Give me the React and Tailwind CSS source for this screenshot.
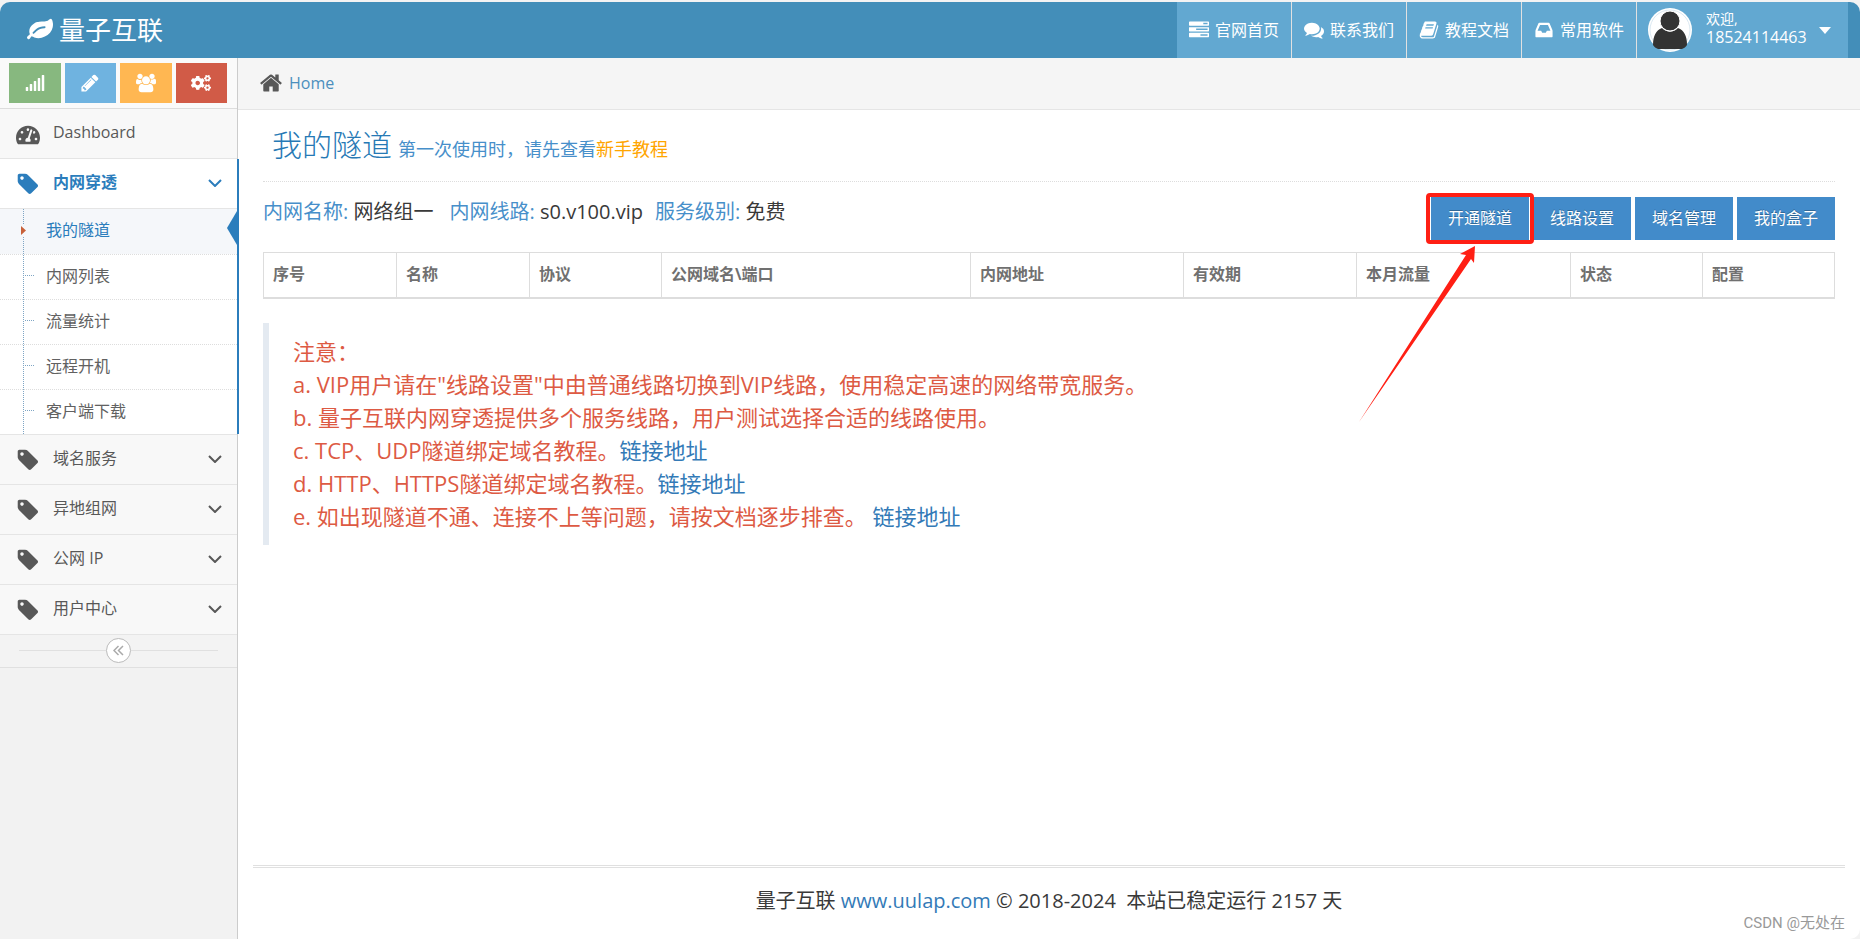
import React, { useState } from "react";
import { FaSignal, FaCogs, FaTachometerAlt } from "react-icons/fa";

const LeafIcon = ({ className }) => (
  <svg viewBox="0 0 1792 1792" fill="currentColor" className={className}>
    <path d="M1280 704q0-26-19-45t-45-19q-172 0-318 49.5t-259.5 134-235.5 219.5q-19 21-19 45 0 26 19 45t45 19q24 0 45-19 27-24 74-71t67-66q137-124 268.5-176t313.5-52q26 0 45-19t19-45zm512-198q0 95-20 193-46 224-184.5 383t-357.5 268q-214 108-438 108-148 0-286-47-15-5-88-42t-96-37q-16 0-39.5 32t-45 70-52.5 70-60 32q-43 0-63.5-17.5t-45.5-59.5q-2-4-6-11t-5.5-10-3-9.5-1.5-13.5q0-35 31-73.5t68-65.5 68-56 31-48q0-4-14-38t-16-44q-9-51-9-104 0-115 43.5-220t119-184.5 170.5-139 204-95.5q55-18 145-25.5t179.5-9 178.5-6 163.5-24 113.5-56.5l29.5-29.5 29.5-28 27-20 36.5-16 43.5-4.5q39 0 70.5 46t47.5 112 24 124 8 96z" />
  </svg>
);

const PencilIcon = ({ className }) => (
  <svg viewBox="0 0 1792 1792" fill="currentColor" className={className}>
    <path d="M491 1536l91-91-235-235-91 91v107h128v128h107zm523-928q0-22-22-22-10 0-17 7l-542 542q-7 7-7 17 0 22 22 22 10 0 17-7l542-542q7-7 7-17zm-54-192l416 416-832 832h-416v-416zm683 96q0 53-37 90l-166 166-416-416 166-165q36-38 90-38 53 0 91 38l235 234q37 39 37 91z" />
  </svg>
);

const GroupIcon = ({ className }) => (
  <svg viewBox="-64 0 1920 1792" fill="currentColor" className={className}>
    <path d="M593 896q-162 5-265 128h-134q-82 0-138-40.5t-56-118.5q0-353 124-353 6 0 43.5 21t97.5 42.5 119 21.5q67 0 133-23-5 37-5 66 0 159 93 290zm1071 637q0 120-73 189.5t-194 69.5h-874q-121 0-194-69.5t-73-189.5q0-53 3.5-103.5t14-109 26.5-108.5 43-97.5 62-81 85.5-53.5 111.5-20q10 0 43 21.5t73 48 107 48 135 21.5 135-21.5 107-48 73-48 43-21.5q61 0 111.5 20t85.5 53.5 62 81 43 97.5 26.5 108.5 14 109 3.5 103.5zm-1024-1277q0 106-75 181t-181 75-181-75-75-181 75-181 181-75 181 75 75 181zm704 384q0 159-112.5 271.5t-271.5 112.5-271.5-112.5-112.5-271.5 112.5-271.5 271.5-112.5 271.5 112.5 112.5 271.5zm576 225q0 78-56 118.5t-138 40.5h-134q-103-123-265-128 93-131 93-290 0-29-5-66 66 23 133 23 59 0 119-21.5t97.5-42.5 43.5-21q124 0 124 353zm-128-609q0 106-75 181t-181 75-181-75-75-181 75-181 181-75 181 75 75 181z" transform="translate(-64 0)" />
  </svg>
);

const TagIcon = ({ className }) => (
  <svg viewBox="0 0 1792 1792" fill="currentColor" className={className}>
    <path d="M576 448q0-53-37.5-90.5t-90.5-37.5-90.5 37.5-37.5 90.5 37.5 90.5 90.5 37.5 90.5-37.5 37.5-90.5zm1067 576q0 53-37 90l-491 492q-39 37-91 37-53 0-90-37l-715-716q-38-37-64.5-101t-26.5-117v-416q0-52 38-90t90-38h416q53 0 117 26.5t102 64.5l715 714q37 39 37 91z" />
  </svg>
);

const HomeIcon = ({ className }) => (
  <svg viewBox="0 0 1792 1792" fill="currentColor" className={className}>
    <path d="M1472 992v480q0 26-19 45t-45 19h-384v-384h-256v384h-384q-26 0-45-19t-19-45v-480q0-1 .5-3t.5-3l575-474 575 474q1 2 1 6zm223-69l-62 74q-8 9-21 11h-3q-13 0-21-7l-692-577-692 577q-12 8-24 7-13-2-21-11l-62-74q-8-10-7-23.5t11-21.5l719-599q32-26 76-26t76 26l244 204v-195q0-14 9-23t23-9h192q14 0 23 9t9 23v408l219 182q10 8 11 21.5t-7 23.5z" />
  </svg>
);

const TasksIcon = ({ className }) => (
  <svg viewBox="0 0 1792 1792" fill="currentColor" className={className}>
    <path d="M1024 1408h640v-128h-640v128zm-384-512h1024v-128h-1024v128zm640-512h384v-128h-384v128zm512 832v256q0 26-19 45t-45 19h-1664q-26 0-45-19t-19-45v-256q0-26 19-45t45-19h1664q26 0 45 19t19 45zm0-512v256q0 26-19 45t-45 19h-1664q-26 0-45-19t-19-45v-256q0-26 19-45t45-19h1664q26 0 45 19t19 45zm0-512v256q0 26-19 45t-45 19h-1664q-26 0-45-19t-19-45v-256q0-26 19-45t45-19h1664q26 0 45 19t19 45z" />
  </svg>
);

const CommentsIcon = ({ className }) => (
  <svg viewBox="0 0 1792 1792" fill="currentColor" className={className}>
    <path d="M1408 768q0 139-94 257t-256.5 186.5-353.5 68.5q-86 0-176-16-124 88-278 128-36 9-86 16h-3q-11 0-20.5-8t-11.5-21q-1-3-1-6.5t.5-6.5 2-6l2.5-5 3.5-5.5 4-5 4.5-5 4-4.5q5-6 23-25t26-29.5 22.5-29 25-38.5 20.5-44q-124-72-195-177t-71-224q0-139 94-257t256.5-186.5 353.5-68.5 353.5 68.5 256.5 186.5 94 257zm384 256q0 120-71 224.5t-195 176.5q10 24 20.5 44t25 38.5 22.5 29 26 29.5 23 25q1 1 4 4.5t4.5 5 4 5 3.5 5.5l2.5 5 2 6 .5 6.5-1 6.5q-3 14-13 22t-22 7q-50-7-86-16-154-40-278-128-90 16-176 16-271 0-472-132 58 4 88 4 161 0 309-45t264-129q125-92 192-212t67-254q0-77-23-152 129 71 204 178t75 230z" />
  </svg>
);

const BookIcon = ({ className }) => (
  <svg viewBox="0 0 1792 1792" fill="currentColor" className={className}>
    <path d="M1703 478q40 57 18 129l-275 906q-19 64-76.5 107.5t-122.5 43.5h-923q-77 0-148.5-53.5t-99.5-131.5q-24-67-2-127 0-4 3-27t4-37q1-8-3-21.5t-3-19.5q2-11 8-21t16.5-23.5 16.5-23.5q23-38 45-91.5t30-91.5q3-10 .5-30t-.5-28q3-11 17-28t17-23q21-36 42-92t25-90q1-9-2.500-32t.5-28q4-13 22-30.5t22-22.5q19-26 42.5-84.5t27.5-96.5q1-8-3-25.5t-2-26.5q2-8 9-18t18-23 17-21q8-12 16.5-30.5t15-35 16-36 19.5-32 26.5-23.5 36-11.5 47.5 5.5l-1 3q38-9 51-9h761q74 0 114 56t18 130l-274 906q-36 119-71.5 153.5t-128.5 34.5h-869q-27 0-38 15-11 16-1 43 24 70 144 70h923q29 0 56-15.5t35-41.5l300-987q7-22 5-57 38 15 59 43zm-1064 2q-4 13 2 22.5t20 9.5h608q13 0 25.5-9.5t16.5-22.5l21-64q4-13-2-22.5t-20-9.5h-608q-13 0-25.5 9.5t-16.5 22.5zm-83 256q-4 13 2 22.5t20 9.5h608q13 0 25.5-9.5t16.5-22.5l21-64q4-13-2-22.5t-20-9.5h-608q-13 0-25.5 9.5t-16.5 22.5z" />
  </svg>
);

const InboxIcon = ({ className }) => (
  <svg viewBox="0 0 1792 1792" fill="currentColor" className={className}>
    <path d="M1151 960h316q-1-3-2.5-8t-2.5-8l-212-496h-708l-212 496q-1 2-2.5 8t-2.5 8h316l95 192h320zm513 30v482q0 26-19 45t-45 19h-1408q-26 0-45-19t-19-45v-482q0-62 25-123l238-552q10-25 36.5-42t52.5-17h832q26 0 52.5 17t36.5 42l238 552q25 61 25 123z" />
  </svg>
);

const AngleDown = () => (
  <svg viewBox="0 0 14 8" className="w-[14px] h-2" fill="none" stroke="currentColor" strokeWidth="2">
    <path d="M1 1l6 6 6-6" />
  </svg>
);

const Avatar = () => (
  <svg viewBox="0 0 44 44" className="w-11 h-11">
    <circle cx="22" cy="22" r="22" fill="#fff" />
    <circle cx="22" cy="22" r="20" fill="none" stroke="#dbe9f2" strokeWidth="1" />
    <path d="M5 37c0-9 3-15 9-17 5 5 11 5 16 0 6 2 9 8 9 17-1 2-3 3-5 4H10c-2-1-4-2-5-4z" fill="#333" />
    <circle cx="22" cy="13" r="10" fill="#333" stroke="#fff" strokeWidth="1" />
  </svg>
);

const topLinks = [
  { label: "官网首页", icon: TasksIcon },
  { label: "联系我们", icon: CommentsIcon },
  { label: "教程文档", icon: BookIcon },
  { label: "常用软件", icon: InboxIcon },
];

const subMenu = ["我的隧道", "内网列表", "流量统计", "远程开机", "客户端下载"];
const otherMenus = ["域名服务", "异地组网", "公网 IP", "用户中心"];
const actions = ["开通隧道", "线路设置", "域名管理", "我的盒子"];

// the last column takes whatever is left
const columns = [
  { title: "序号", width: "w-[133px]" },
  { title: "名称", width: "w-[133px]" },
  { title: "协议", width: "w-[132px]" },
  { title: "公网域名\\端口", width: "w-[309px]" },
  { title: "内网地址", width: "w-[213px]" },
  { title: "有效期", width: "w-[173px]" },
  { title: "本月流量", width: "w-[214px]" },
  { title: "状态", width: "w-[132px]" },
  { title: "配置", width: "w-auto" },
];

const Header = () => (
  <header className="flex h-14 items-stretch bg-[#438eb9] rounded-t-[10px] text-white pr-3">
    <a href="#" className="flex items-center gap-[6px] pl-[27px] text-[26px]">
      <LeafIcon className="w-[26px] h-[26px]" />
      量子互联
    </a>
    <nav className="ml-auto flex">
      {topLinks.map(({ label, icon: Icon }) => (
        <a
          key={label}
          href="#"
          className="flex w-[115px] items-center gap-[6px] pl-3 bg-[#62a8d1] border-r border-[#e1e1e1] text-base whitespace-nowrap"
        >
          <Icon className="w-5 h-5 shrink-0" />
          {label}
        </a>
      ))}
      <button type="button" className="flex w-[211px] items-center bg-[#62a8d1] pl-[11px] text-left">
        <Avatar />
        <span className="ml-[14px] w-[102px] pb-1 text-base leading-[18px]">
          <small className="block text-sm leading-[18px]">欢迎,</small>
          18524114463
        </span>
        <svg viewBox="0 0 12 7" className="ml-[11px] w-3 h-[7px]" fill="currentColor">
          <path d="M0 0h12L6 7z" />
        </svg>
      </button>
    </nav>
  </header>
);

const Sidebar = () => {
  const [open, setOpen] = useState(true);

  return (
    <aside className="relative z-10 w-[238px] shrink-0 bg-[#f2f2f2] border-r border-[#ccc] text-base text-[#585858]">
      <div className="flex h-[51px] gap-1 pl-[9px] pr-[10px] pt-[5px] bg-[#fafafa] border-b border-[#ddd] text-white">
        <button type="button" aria-label="统计" className="flex flex-1 h-10 items-center justify-center bg-[#87b87f]">
          <FaSignal className="w-5 h-4" />
        </button>
        <button type="button" aria-label="编辑" className="flex flex-1 h-10 items-center justify-center bg-[#6fb3e0]">
          <PencilIcon className="w-5 h-5" />
        </button>
        <button type="button" aria-label="用户" className="flex flex-1 h-10 items-center justify-center bg-[#ffb752]">
          <GroupIcon className="w-5 h-5" />
        </button>
        <button type="button" aria-label="设置" className="flex flex-1 h-10 items-center justify-center bg-[#d15b47]">
          <FaCogs className="w-5 h-5" />
        </button>
      </div>

      <ul>
        <li className="border-b border-[#e5e5e5] bg-[#f8f8f8]">
          <a href="#" className="flex h-[49px] items-center pl-4">
            <FaTachometerAlt className="mr-[13px] mt-[2px] w-6 h-6" />
            <span className="pb-1">Dashboard</span>
          </a>
        </li>

        <li className="relative bg-white border-b border-[#e5e5e5]">
          <button
            type="button"
            onClick={() => setOpen(!open)}
            className="flex w-full h-[49px] items-center pl-4 pr-[15px] pb-px font-bold text-[#2b7dbc]"
          >
            <TagIcon className="mr-[13px] mt-[2px] w-6 h-6" />
            <span className="mr-auto pb-[3px]">内网穿透</span>
            <AngleDown />
          </button>
          {open && (
            <ul className="relative border-t border-[#e5e5e5]">
              {subMenu.map((item, i) => (
                <li
                  key={item}
                  className={
                    i === 0
                      ? "relative h-[45px] bg-[#f5f7fa]"
                      : "relative h-[45px] border-t border-dotted border-[#ddd]"
                  }
                >
                  <a
                    href="#"
                    className={
                      i === 0
                        ? "flex h-full items-center pl-[46px] pb-[3px] text-[#2b7dbc]"
                        : "flex h-full items-center pl-[46px] pb-[3px] text-[#616161]"
                    }
                  >
                    {item}
                  </a>
                  {i > 0 && (
                    <span className="absolute left-[25px] top-5 w-[9px] border-t border-dotted border-[#7ea5c4]" />
                  )}
                </li>
              ))}
              <li className="absolute left-[23px] inset-y-0 border-l border-dotted border-[#7ea5c4]" />
              <li className="absolute left-5 top-[15px] bg-[#f5f7fa] py-[2px] text-[#c86139]">
                <svg viewBox="0 0 6 9" className="w-[6px] h-[9px]" fill="currentColor">
                  <path d="M1 0l5 4.500L1 9z" />
                </svg>
              </li>
              <li className="absolute right-0 top-[2px] text-[#2b7dbc]">
                <svg viewBox="0 0 10 34" className="w-[10px] h-[34px]" fill="currentColor">
                  <path d="M10 0v34L0 17z" />
                </svg>
              </li>
            </ul>
          )}
          <span className="absolute -right-[2px] inset-y-0 w-[2px] bg-[#2b7dbc]" />
        </li>

        {otherMenus.map((item) => (
          <li key={item} className="border-b border-[#e5e5e5] bg-[#f8f8f8]">
            <button type="button" className="flex w-full h-[49px] items-center pl-4 pr-[15px] pb-px">
              <TagIcon className="mr-[13px] mt-[2px] w-6 h-6" />
              <span className="mr-auto pb-[3px]">{item}</span>
              <AngleDown />
            </button>
          </li>
        ))}
      </ul>

      <div className="flex h-[33px] items-center px-[19px] pb-px border-b border-[#e0e0e0] bg-[#f3f3f3]">
        <span className="flex-1 border-t border-[#e0e0e0]" />
        <button
          type="button"
          aria-label="收起菜单"
          className="flex w-[25px] h-[25px] items-center justify-center rounded-full border border-[#bbb] bg-white text-[#aaa]"
        >
          <svg viewBox="0 0 11 11" className="w-[11px] h-[11px]" fill="none" stroke="currentColor" strokeWidth="1.500">
            <path d="M5.500 1L1 5.500 5.500 10M10 1L5.500 5.500 10 10" />
          </svg>
        </button>
        <span className="flex-1 border-t border-[#e0e0e0]" />
      </div>
    </aside>
  );
};

const Notice = () => (
  <blockquote className="mt-6 border-l-[6px] border-[#e4eaf1] py-3 pl-6 text-[22px] leading-[33px] text-[#dd5a43]">
    <p>注意：</p>
    <p>a. VIP用户请在"线路设置"中由普通线路切换到VIP线路，使用稳定高速的网络带宽服务。</p>
    <p>b. 量子互联内网穿透提供多个服务线路，用户测试选择合适的线路使用。</p>
    <p>
      c. TCP、UDP隧道绑定域名教程。
      <a href="#" className="text-[#337ab7]">链接地址</a>
    </p>
    <p>
      d. HTTP、HTTPS隧道绑定域名教程。
      <a href="#" className="text-[#337ab7]">链接地址</a>
    </p>
    <p>
      e. 如出现隧道不通、连接不上等问题，请按文档逐步排查。{" "}
      <a href="#" className="text-[#337ab7]">链接地址</a>
    </p>
  </blockquote>
);

const App = () => {
  return (
    <div
      lang="zh-CN"
      className="flex min-h-screen flex-col bg-[#f3f3f3] pt-[2px] font-['Open_Sans','Noto_Sans_CJK_SC',sans-serif] text-[#393939]"
    >
      <Header />
      <div className="flex flex-1">
        <Sidebar />
        <div className="relative flex min-w-0 flex-1 flex-col bg-white rounded-br-[10px]">
          <div className="flex h-[52px] items-center gap-[6px] border-b border-[#e5e5e5] bg-[#f5f5f5] pl-[21px] pb-[2px] text-base">
            <HomeIcon className="w-6 h-6 text-[#585858]" />
            <a href="#" className="text-[#4c8fbd]">Home</a>
          </div>

          <main className="px-[25px]">
            <h1 className="flex h-[72px] items-baseline gap-[6px] border-b border-dotted border-[#ddd] pl-[9px] pt-3 text-[30px] leading-[45px] font-light text-[#2679b5]">
              我的隧道
              <small className="text-[18px] text-[#478fca] font-normal">
                第一次使用时，请先查看
                <a href="#" className="text-[#ffa500]">新手教程</a>
              </small>
            </h1>

            <div className="flex items-start justify-between pt-[15px]">
              <p className="flex pt-px text-xl leading-7">
                <span className="mr-4">
                  <span className="text-[#478fca]">内网名称:</span> 网络组一
                </span>
                <span className="mr-3">
                  <span className="text-[#478fca]">内网线路:</span> s0.v100.vip
                </span>
                <span>
                  <span className="text-[#478fca]">服务级别:</span> 免费
                </span>
              </p>
              <div className="flex gap-1">
                {actions.map((item, i) => (
                  <div key={item} className="relative">
                    <button
                      type="button"
                      className="w-[98px] h-[43px] pb-[2px] bg-[#428bca] text-base text-white [text-shadow:0_-1px_0_rgba(0,0,0,0.25)]"
                    >
                      {item}
                    </button>
                    {i === 0 && (
                      <>
                        <span className="absolute z-10 -inset-x-[5px] -inset-y-1 rounded border-4 border-[#ff1f14]" />
                        <svg
                          viewBox="0 0 118 176"
                          className="absolute z-10 -left-[72px] top-[49px] w-[118px] h-[176px] text-[#ff1f14]"
                          fill="currentColor"
                        >
                          <path d="M116 0L101 8l6 1L0 176 112 13l3 4z" />
                        </svg>
                      </>
                    )}
                  </div>
                ))}
              </div>
            </div>

            <table className="mt-3 w-full table-fixed border-collapse border border-[#ddd] text-base text-[#707070]">
              <thead>
                <tr className="h-[45px]">
                  {columns.map((col) => (
                    <th
                      key={col.title}
                      className={`${col.width} border border-b-2 border-[#ddd] px-[9px] pb-[2px] text-left font-bold`}
                    >
                      {col.title}
                    </th>
                  ))}
                </tr>
              </thead>
            </table>

            <Notice />
          </main>

          <footer className="mx-[15px] mt-auto flex h-[74px] justify-center border-t-[3px] border-double border-[#e0e0e0] pt-[19px] text-xl leading-7">
            <p className="whitespace-pre">
              量子互联 <a href="#" className="text-[#337ab7]">www.uulap.com</a> © 2018-2024{"  "}本站已稳定运行 2157 天
            </p>
          </footer>
          <span className="absolute right-[15px] bottom-[5px] text-[15px] leading-[22px] text-[#999] font-['Roboto','Noto_Sans_CJK_SC',sans-serif]">
            CSDN @无处在
          </span>
        </div>
      </div>
    </div>
  );
};

export default App;
